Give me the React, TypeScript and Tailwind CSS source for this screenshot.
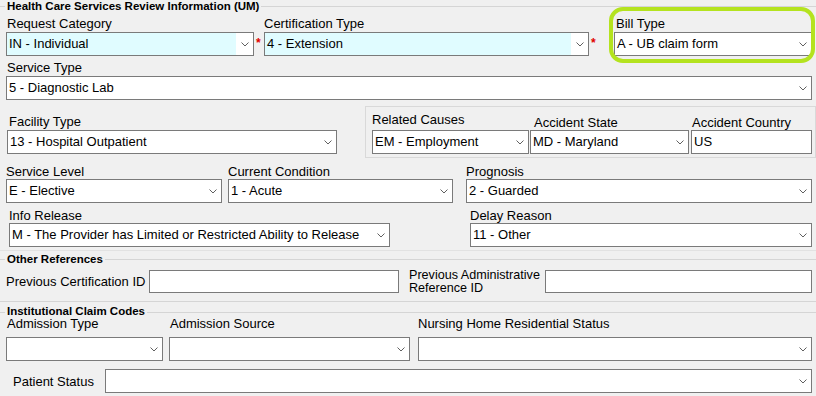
import React from "react";

const Chevron = () => (
  <svg width="8" height="5" viewBox="0 0 8 5" className="block">
    <polyline points="0.5,0.5 4,4 7.5,0.5" fill="none" stroke="#606060" strokeWidth="1" />
  </svg>
);

function Combo({ className, value, cyan }: { className: string; value?: string; cyan?: boolean }) {
  return (
    <div className={"h-[24px] border border-[#7a7a7a] bg-white flex items-stretch " + className}>
      <div
        className={
          "flex-1 min-w-0 pl-[2px] flex items-center whitespace-nowrap overflow-hidden " +
          (cyan ? "bg-[#e0fcff]" : "")
        }
      >
        {value}
      </div>
      <div className="w-[17px] flex items-center justify-center">
        <Chevron />
      </div>
    </div>
  );
}

function TextBox({ className, value }: { className: string; value?: string }) {
  return (
    <div className={"h-[23px] border border-[#7a7a7a] bg-white flex items-center pl-[2px] whitespace-nowrap " + className}>
      {value}
    </div>
  );
}

function Header({ title, className, lead }: { title: string; className: string; lead: string }) {
  return (
    <div className={"flex items-start " + className}>
      <div className="w-[5px] h-px bg-[#d5d5d5] mt-[6px]" />
      <span className={"px-[2px] font-bold text-[11.5px] whitespace-nowrap " + lead}>{title}</span>
      <div className="flex-1 h-px bg-[#d5d5d5] mt-[6px]" />
    </div>
  );
}

const Star = () => (
  <span className="text-[#e00000] text-[12px] leading-[10px] font-bold">*</span>
);

export default function App() {
  return (
    <div className="w-[816px] h-[396px] overflow-hidden bg-[#f0f0f0] relative flex flex-col text-[13px] text-black font-['Liberation_Sans',Arial,sans-serif]">
      <Header title="Health Care Services Review Information (UM)" className="h-[13px]" lead="leading-[13px]" />

      {/* Row 1 */}
      <div className="mt-[3px] flex items-start">
        <div className="ml-[6px] w-[248px]">
          <div className="h-[16px] leading-[15px] pl-[1px] whitespace-nowrap">Request Category</div>
          <Combo className="w-[248px]" value="IN - Individual" cyan />
        </div>
        <div className="w-[10px] pt-[17px] pl-[2px]">
          <Star />
        </div>
        <div className="w-[325px]">
          <div className="h-[16px] leading-[15px] whitespace-nowrap">Certification Type</div>
          <Combo className="w-[325px]" value="4 - Extension" cyan />
        </div>
        <div className="w-[25px] pt-[17px] pl-[2px]">
          <Star />
        </div>
        <div className="w-[198px]">
          <div className="h-[16px] leading-[15px] pl-[2px] whitespace-nowrap">Bill Type</div>
          <Combo className="w-[198px]" value="A - UB claim form" />
        </div>
      </div>

      {/* Row 2 */}
      <div className="mt-[4px] ml-[6px]">
        <div className="h-[16px] leading-[15px] pl-[1px]">Service Type</div>
        <Combo className="w-[806px]" value="5 - Diagnostic Lab" />
      </div>

      {/* Row 3 */}
      <div className="mt-[6px] flex items-start h-[52px]">
        <div className="ml-[7px] pt-[8px]">
          <div className="h-[16px] leading-[15px] pl-[2px]">Facility Type</div>
          <Combo className="w-[330px]" value="13 - Hospital Outpatient" />
        </div>
        <div className="ml-[28px] w-[451px] h-[52px] border border-[#d9d9d9] flex items-end pb-[3px] pl-[6px]">
          <div>
            <div className="leading-[15px] mb-[3px] whitespace-nowrap">Related Causes</div>
            <Combo className="w-[157px]" value="EM - Employment" />
          </div>
          <div className="ml-[1px]">
            <div className="leading-[15px] pl-[4px] whitespace-nowrap">Accident State</div>
            <Combo className="w-[159px]" value="MD - Maryland" />
          </div>
          <div className="ml-[2px]">
            <div className="leading-[15px] pl-[1px] whitespace-nowrap">Accident Country</div>
            <TextBox className="w-[121px] h-[24px]" value="US" />
          </div>
        </div>
      </div>

      {/* Row 4 */}
      <div className="mt-[6px] flex items-start">
        <div className="ml-[6px]">
          <div className="h-[15px] leading-[15px]">Service Level</div>
          <Combo className="w-[216px]" value="E - Elective" />
        </div>
        <div className="ml-[6px]">
          <div className="h-[15px] leading-[15px]">Current Condition</div>
          <Combo className="w-[225px]" value="1 - Acute" />
        </div>
        <div className="ml-[13px]">
          <div className="h-[15px] leading-[15px]">Prognosis</div>
          <Combo className="w-[346px]" value="2 - Guarded" />
        </div>
      </div>

      {/* Row 5 */}
      <div className="mt-[5px] flex items-start">
        <div className="ml-[9px]">
          <div className="h-[15px] leading-[15px]">Info Release</div>
          <Combo className="w-[381px]" value="M - The Provider has Limited or Restricted Ability to Release" />
        </div>
        <div className="ml-[80px]">
          <div className="h-[15px] leading-[15px]">Delay Reason</div>
          <Combo className="w-[342px]" value="11 - Other" />
        </div>
      </div>

      <div className="mt-[3px] h-px bg-[#e2e2e2]" />

      <Header title="Other References" className="mt-[2px] h-[13px]" lead="leading-[13px]" />

      <div className="mt-[4px] flex items-center h-[23px]">
        <div className="ml-[6px] w-[143px] leading-[15px] whitespace-nowrap">Previous Certification ID</div>
        <TextBox className="w-[250px]" />
        <div className="ml-[10px] w-[136px] leading-[13px] text-[12.6px]">
          <div className="whitespace-nowrap">Previous Administrative</div>
          <div className="whitespace-nowrap">Reference ID</div>
        </div>
        <TextBox className="w-[267px]" />
      </div>

      <div className="mt-[8px] h-px bg-[#d5d5d5]" />

      <Header title="Institutional Claim Codes" className="mt-[4px] h-[10px]" lead="leading-[10px]" />

      <div className="flex items-start">
        <div className="ml-[6px]">
          <div className="h-[21px] leading-[12px] pt-[2px] pl-[1px]">Admission Type</div>
          <Combo className="w-[157px]" />
        </div>
        <div className="ml-[6px]">
          <div className="h-[21px] leading-[12px] pt-[2px] pl-[1px]">Admission Source</div>
          <Combo className="w-[241px]" />
        </div>
        <div className="ml-[8px]">
          <div className="h-[21px] leading-[12px] pt-[2px]">Nursing Home Residential Status</div>
          <Combo className="w-[394px]" />
        </div>
      </div>

      <div className="mt-[8px] flex items-center">
        <div className="ml-[13px] w-[92px] leading-[15px] whitespace-nowrap">Patient Status</div>
        <Combo className="w-[707px]" />
      </div>

      {/* annotation highlight */}
      <div className="absolute left-[609px] top-[7px] w-[206px] h-[56px] border-[4px] border-[#b4e31f] rounded-[14px] pointer-events-none" />
    </div>
  );
}
